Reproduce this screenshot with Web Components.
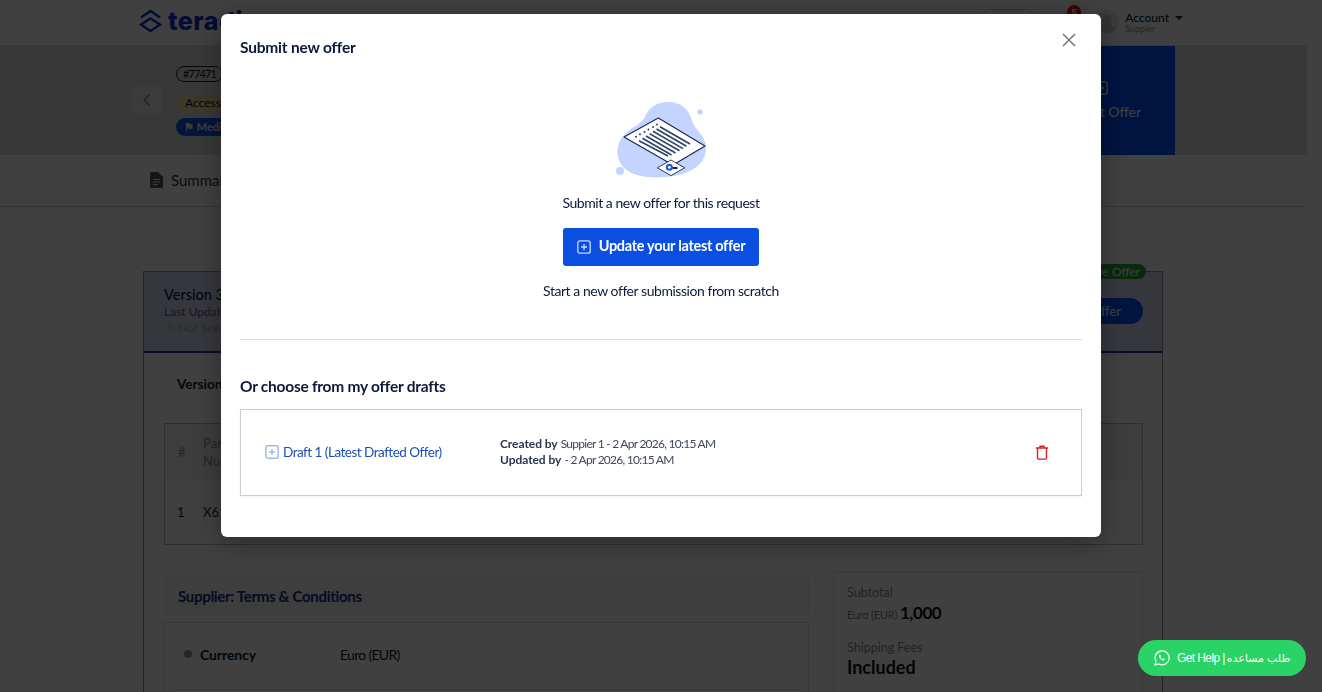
<!DOCTYPE html>
<html><head><meta charset="utf-8">
<style>
html,body{margin:0;height:100%;overflow:hidden;background:#fff}
body{font-family:Lato,"Liberation Sans",sans-serif;font-size:12px;color:#0b1a3c}
</style></head>
<body>
<app-header></app-header>
<app-hero></app-hero>
<app-tabs></app-tabs>
<offer-card></offer-card>
<offer-modal>
  <draft-row></draft-row>
</offer-modal>
<help-button></help-button>
<script>
function def(name,html){customElements.define(name,class extends HTMLElement{
  constructor(){super();this.attachShadow({mode:'open'}).innerHTML=html;}
});}
const PLUS=(s,c,w)=>`<svg width="${s}" height="${s}" viewBox="0 0 14 14" fill="none" stroke="${c}" stroke-width="${w||1.3}"><rect x=".8" y=".8" width="12.4" height="12.4" rx="2"/><path d="M7 4v6M4 7h6"/></svg>`;

def('app-header',`<style>
:host{display:flex;align-items:center;box-sizing:border-box;height:46px;width:1307px;padding-left:139px;border-bottom:1px solid #ddd}
.logo{display:flex;align-items:center;gap:6px;font:800 25px/1 Inter,sans-serif;letter-spacing:.5px;color:#1030d8;margin-top:-3px}
.right{margin-left:auto;display:flex;align-items:center;margin-right:124px}
.search{width:58px;height:24px;border:1px solid #ccc;border-radius:12px;box-sizing:border-box;margin-right:30px;margin-top:-4px}
.bell{width:14px;height:14px;border-radius:50%;background:#e01010;color:#fff;font:700 9px/14px "Liberation Sans";text-align:center;margin:-22px 14px 0 0}
.av{display:block;width:24px;height:24px;margin-right:6px;margin-top:-1px}
.acc{font:500 12px/13px Lato,sans-serif;color:#0b1a3c;margin-top:-2px}
.acc small{display:block;font-size:9px;line-height:9px;color:#999}
.car{display:inline-block;border:4px solid transparent;border-top:4px solid #222;border-bottom:0;margin:0 0 2px 6px}
</style>
<div class="logo"><svg width="23" height="24" viewBox="0 0 23 24" fill="none" stroke="#1030d8" stroke-width="2.6"><path d="M2 8.500 11.500 2 21 8.500"/><path d="M11.500 9.500 21 15.500 11.500 22 2 15.500Z"/></svg><span>teradix</span></div>
<div class="right"><div class="search"></div><div class="bell">5</div><svg class="av" viewBox="0 0 24 24"><circle cx="12" cy="12" r="12" fill="#e4e4e4"/><circle cx="12" cy="9.500" r="4.500" fill="#c8c8c8"/><path d="M4.500 20c1-4.500 4-6 7.500-6s6.500 1.500 7.500 6a12 12 0 0 1-15 0Z" fill="#c8c8c8"/></svg><div class="acc">Account<i class="car"></i><small>Suppier</small></div></div>`);

def('app-hero',`<style>
:host{display:flex;align-items:center;box-sizing:border-box;height:109px;width:1307px;background:#dedede;padding-left:132px}
.back{width:30px;height:30px;background:#eaeaea;display:flex;align-items:center;justify-content:center;margin-right:14px;margin-top:-1px}
.pills{display:flex;flex-direction:column;align-items:flex-start}
.id{border:1px solid #222;border-radius:9px;font-size:11px;letter-spacing:-.9px;line-height:14px;padding:0 6px;margin-bottom:13px;color:#111}
.acc{background:#ffd9a8;border-radius:9px;font-size:12px;line-height:16px;padding:0 30px 0 9px;margin-bottom:7px;color:#111}
.med{background:#0f55ee;border-radius:9px;font-size:11px;line-height:18px;padding:0 30px 0 8px;color:#eef;font-weight:700}
.cta{margin-left:auto;margin-right:132px;width:160px;height:109px;background:#0050ff;color:#fff;display:flex;flex-direction:column;align-items:flex-end;padding-right:34px;box-sizing:border-box;font-size:14px;justify-content:center;gap:8px}
.cta svg{margin-right:33px}
</style>
<div class="back"><svg width="10" height="14" viewBox="0 0 10 14" fill="none" stroke="#777" stroke-width="1.3"><path d="M7.500 1.500 2 7l5.500 5.500"/></svg></div>
<div class="pills"><span class="id">#77471</span><span class="acc">Accessories</span><span class="med">&#9873; Medium</span></div>
<div class="cta">${PLUS(14,'#fff')}<span>Submit Offer</span></div>`);

def('app-tabs',`<style>
:host{display:flex;align-items:center;box-sizing:border-box;height:52px;width:1305px;padding:0 0 1px 150px;border-bottom:1px solid #ccc;gap:8px;font-size:15px;color:#334}
</style>
<svg width="13" height="16" viewBox="0 0 13 16"><path d="M0 1.500A1.500 1.500 0 0 1 1.500 0H8l5 5v9.500a1.500 1.500 0 0 1-1.500 1.500h-10A1.500 1.500 0 0 1 0 14.500Z" fill="#555"/><path d="M3 7.500h7M3 10h7M3 12.500h5" stroke="#eee"/></svg><span>Summary</span>`);

def('offer-card',`<style>
:host{display:block;box-sizing:border-box;width:1020px;height:500px;margin:64px 0 0 143px;border:1px solid #8a93b8;border-bottom:0;position:relative;font-size:12px}
.head{height:81px;background:#d4dcf0;border-bottom:2px solid #223a88;box-sizing:border-box;padding:14px 20px;line-height:16px;position:relative}
.head b{font-size:14.500px;font-weight:500;display:block;line-height:18px}
.head p{margin:0;color:#667}
.head p.s{color:#aaa}
.tag{position:absolute;right:16px;top:-8px;background:#1fa82c;color:#fff;border-radius:8px;font-size:12px;line-height:15px;padding:0 6px 0 8px}
.btn{position:absolute;right:19px;top:26px;background:#0050ff;color:#fff;border-radius:13px;line-height:26px;padding:0 22px 0 16px;font-size:13px}
.ver{font-weight:700;margin:23px 0 0 33px;line-height:16px;font-size:13.500px}
table{width:979px;margin:31px 0 0 20px;border:1px solid #bbb;border-collapse:collapse;height:122px;table-layout:fixed;font-size:13px}
th{background:#f2f2f2;height:54px;text-align:left;font-weight:500;color:#999;padding-left:13px;line-height:18px}
td{padding-left:12px;color:#222}
th+th,td+td{padding-left:11px}
.cols{display:flex;margin:32px 0 0 20px;gap:24px;align-items:flex-start}
.l{width:645px}
.ttl{height:38px;background:#f6f6f6;border:1px solid #eee;box-sizing:border-box;padding-left:13px;font:700 15px/36px Lato,sans-serif;letter-spacing:-.3px;color:#12307c}
.box{margin-top:7px;border:1px solid #ddd;height:90px;box-sizing:border-box;padding:0 16px}
.row{display:flex;align-items:center;height:62px;border-bottom:1px solid #ddd;margin:0 -10px;padding:0 16px 4px 13px;font-size:14px}
.row i{width:8px;height:8px;border-radius:50%;background:#999;margin-right:8px}
.row b{width:140px;letter-spacing:-.1px}
.row span{letter-spacing:-.7px}
.r{width:310px;height:130px;border:1px solid #ddd;box-sizing:border-box;margin-top:-5px;padding:12px 13px;line-height:15px}
.r span{color:#888;font-size:12.500px}
.r .big{font-size:18px;font-weight:700;display:block;line-height:22px;color:#111;margin-top:1px}
.r p{margin:5px 0 18px;color:#888;font-size:11px;letter-spacing:-.2px}
.r p b{font-size:17px;letter-spacing:-.4px;color:#111}
</style>
<div class="head"><b>Version 3</b><p>Last Update</p><p class="s">&#9737; Not Seen</p><span class="tag">Active Offer</span><span class="btn">Edit Offer</span></div>
<div class="ver">Version 3</div>
<table><tr><th style="width:13px">#</th><th>Part<br>Number</th></tr><tr><td>1</td><td>X61</td></tr></table>
<div class="cols"><div class="l"><div class="ttl">Supplier: Terms &amp; Conditions</div><div class="box"><div class="row"><i></i><b>Currency</b><span>Euro (EUR)</span></div></div></div>
<div class="r"><span>Subtotal</span><p>Euro (EUR) <b>1,000</b></p><span>Shipping Fees</span><div class="big">Included</div></div></div>`);

def('offer-modal',`<style>
:host{position:fixed;inset:0;background:rgba(0,0,0,.75);display:flex;justify-content:center;align-items:flex-start;padding-top:14px;box-sizing:border-box}
.m{position:relative;width:880px;height:523px;box-sizing:border-box;padding:23px 19px 0;background:#fff;border-radius:6px;box-shadow:0 6px 30px rgba(0,0,0,.35);color:#0b1a3c;font-size:14px;line-height:20px;text-align:center;letter-spacing:-.45px}
h2{margin:0;font-size:15.500px;font-weight:700;line-height:20px;text-align:left;letter-spacing:-.2px}
.x{position:absolute;top:19px;right:25px;width:14px;height:14px}
svg.art{display:block;margin:38px auto 0}
p{margin:0}
.t1{margin-top:13px}
.b{display:flex;align-items:center;justify-content:center;gap:8px;width:196px;height:38px;margin:15px auto;background:#0a4fe0;color:#fff;border-radius:3px;font-weight:700;font-size:14.500px;line-height:16px;letter-spacing:-.3px}
.b span{margin-top:-2px}
hr{border:0;border-top:1px solid #ddd;margin:38px 0 36px}
h3{margin:0 0 13px;font-size:15.500px;font-weight:700;text-align:left;letter-spacing:-.25px}
</style>
<div class="m">
<h2>Submit new offer</h2>
<svg class="x" viewBox="0 0 14 14" fill="none" stroke="#777" stroke-width="1.500"><path d="M1 1l12 12M13 1 1 13"/></svg>
<svg class="art" width="100" height="85" viewBox="611 95 100 85">
<path d="M668 102c13 0 21 7 24 19 3 9 13 14 14 26 1 16-14 26-32 29-19 3-45 2-53-12-7-12-3-24 6-32 8-7 14-7 19-17 4-9 12-13 22-13Z" fill="#c3d4ff"/>
<circle cx="700" cy="112" r="2.800" fill="#c3d4ff"/><circle cx="620" cy="171" r="4" fill="#c3d4ff"/>
<path d="M658.300 118 705 146 673 165 624 137Z" fill="#fff" stroke="#1b2550" stroke-width="1.100" stroke-linejoin="round"/>
<g stroke="#2d4269" stroke-width="1.600"><path d="M660 126.700 690 144M656.500 129 686.500 146.300M653 131.300 683 148.600M649.500 133.600 679.500 150.800M646 136 675.500 153M642.500 138.300 671.500 155M639 140.700 668 156"/></g>
<g fill="#2d4269"><circle cx="636" cy="136.700" r="1"/><circle cx="640" cy="134.200" r="1"/><circle cx="644.500" cy="132" r="1"/><circle cx="648.500" cy="129.500" r="1"/><circle cx="653" cy="127" r="1"/><circle cx="657" cy="124.500" r="1"/></g>
<path d="M671 160 684.700 167.800 671 175.600 657.300 167.800Z" fill="#fff" stroke="#1b2550" stroke-width=".9" stroke-linejoin="round"/>
<circle cx="669.300" cy="167.300" r="3.500" fill="#1a5bd8"/><circle cx="669.300" cy="167.300" r="1.400" fill="#fff"/><path d="M672.500 168h5" stroke="#1b2550" stroke-width="2.200"/>
</svg>
<p class="t1">Submit a new offer for this request</p>
<div class="b">${PLUS(14,'#cdd9f8')}<span>Update your latest offer</span></div>
<p>Start a new offer submission from scratch</p>
<hr>
<h3>Or choose from my offer drafts</h3>
<slot></slot>
</div>`);

def('draft-row',`<style>
:host{display:flex;align-items:center;box-sizing:border-box;height:87px;border:1px solid #ccc;padding:0 32px 0 24px;box-shadow:0 1px 2px rgba(0,0,0,.06);text-align:left;letter-spacing:0}
.n{display:flex;align-items:center;gap:4px;width:235px;color:#1d4db8;font-size:13.500px;line-height:20px;letter-spacing:-.5px;padding-bottom:2px}
.n svg{flex:none;margin-top:1px}
.c{font-size:12px;line-height:16px;color:#3e4660;margin-top:-1px}
.c b{font-weight:700;color:#2b3550;letter-spacing:-.05px}
.c span{letter-spacing:-.75px}
.tr{margin-left:auto;display:flex}
</style>
<div class="n">${PLUS(14,'#a4b8e4',1.4)}<span>Draft 1 (Latest Drafted Offer)</span></div>
<div class="c"><div><b>Created by</b>&nbsp;<span>Suppier 1 - 2 Apr 2026, 10:15 AM</span></div><div><b>Updated by</b>&nbsp;<span>- 2 Apr 2026, 10:15 AM</span></div></div>
<div class="tr"><svg width="14" height="15" viewBox="0 0 14 15" fill="none" stroke="#d9202a" stroke-width="1.400"><path d="M1 3h12M5 3V1.200h4V3"/><path d="M2.500 3v9.800a1.300 1.300 0 0 0 1.300 1.300h6.400a1.300 1.300 0 0 0 1.300-1.300V3"/></svg></div>`);

def('help-button',`<style>
:host{position:fixed;right:16px;bottom:16px;width:168px;height:36px;box-sizing:border-box;border-radius:18px;background:#29d366;color:#fff;display:flex;align-items:center;gap:7px;padding-left:16px;font:12px/1 "Liberation Sans","DejaVu Sans",sans-serif}
.en{letter-spacing:-.6px}
.ar{font-size:11px;margin-left:2px}
</style>
<svg width="16" height="16" viewBox="0 0 16 16" fill="none" stroke="#fff"><path d="M1 15l1-3.800A7 7 0 1 1 4.800 14Z" stroke-width="1.200"/><path d="M5.500 4.500c-1 .8-.7 2.300.6 3.900 1.400 1.700 3 2.400 4 1.800l.8-1-1.700-1-.8.700c-.8-.3-1.600-1.200-2-2l.6-.8-.8-1.700Z" fill="#fff" stroke="none"/></svg>
<span><span class="en">Get Help |</span><span class="ar" dir="rtl"> طلب مساعده</span></span>`);
</script>
</body></html>
